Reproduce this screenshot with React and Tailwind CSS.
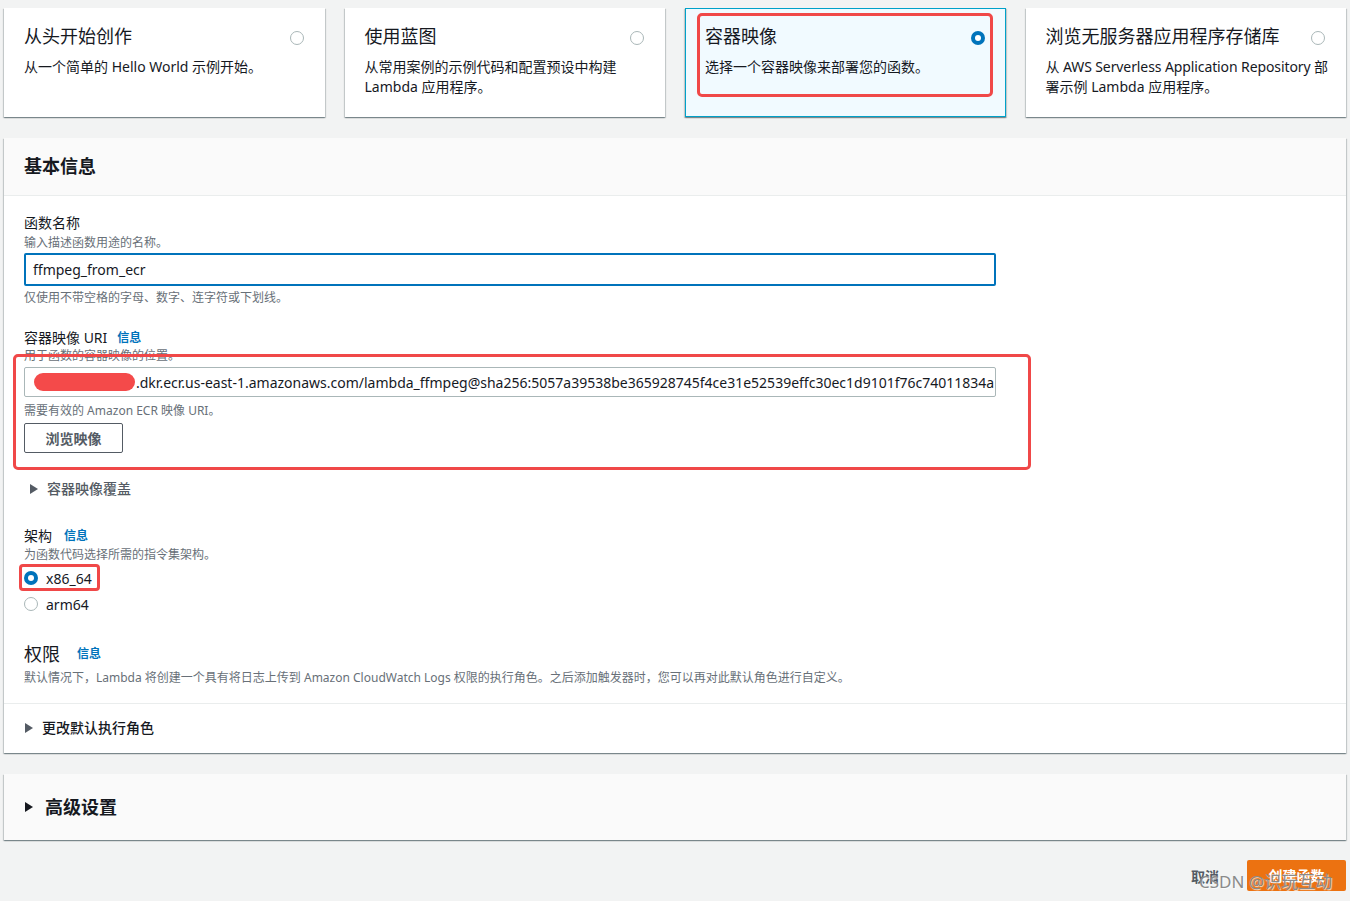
import React from "react";

const FONT = { fontFamily: '"Noto Sans", "Noto Sans CJK SC", sans-serif' };

function Radio({ checked }) {
  return checked ? (
    <span className="flex h-[14px] w-[14px] shrink-0 items-center justify-center rounded-full bg-[#0073bb]">
      <span className="block h-[6px] w-[6px] rounded-full bg-white" />
    </span>
  ) : (
    <span className="block h-[14px] w-[14px] shrink-0 rounded-full border border-[#aab7b8] bg-white" />
  );
}

function Tri({ className = "" }) {
  return (
    <svg width="8" height="10" viewBox="0 0 8 10" className={className}>
      <path d="M0 0 L8 5 L0 10 Z" fill="currentColor" />
    </svg>
  );
}

const cardShadow =
  "shadow-[0_1px_1px_0_rgba(0,28,36,0.3),1px_1px_1px_0_rgba(0,28,36,0.15),-1px_1px_1px_0_rgba(0,28,36,0.15)]";

function Card({ title, desc, selected, highlight }) {
  return (
    <div
      className={`relative h-[109px] ${cardShadow} ${
        selected ? "border border-[#00a1c9] bg-[#f1faff] px-[19px] pt-[14px]" : "bg-white px-5 pt-[15px]"
      }`}
    >
      <div className="flex items-start justify-between">
        <div className="text-[18px] leading-[26px] text-[#16191f]">{title}</div>
        <div className="mt-[8px] mr-[1px]">
          <Radio checked={selected} />
        </div>
      </div>
      <div className="mt-[8px] whitespace-nowrap text-[14px] leading-[20px] text-[#16191f]">{desc}</div>
      {highlight && (
        <div className="absolute left-[11px] top-[4px] h-[84px] w-[296px] rounded-[5px] border-[3px] border-[#f04848]" />
      )}
    </div>
  );
}

export default function App() {
  return (
    <div style={FONT} className="relative min-h-[901px] w-[1350px] bg-[#f2f3f3] px-[4px] pt-[8px]">
      <div className="grid grid-cols-4 gap-5">
        <Card title="从头开始创作" desc="从一个简单的 Hello World 示例开始。" />
        <Card title="使用蓝图" desc={<>从常用案例的示例代码和配置预设中构建<br />Lambda 应用程序。</>} />
        <Card title="容器映像" desc="选择一个容器映像来部署您的函数。" selected highlight />
        <Card
          title="浏览无服务器应用程序存储库"
          desc={
            <>
              <span className="tracking-[-0.1px]">从 AWS Serverless Application Repository 部</span>
              <br />
              署示例 Lambda 应用程序。
            </>
          }
        />
      </div>

      {/* Basic info panel */}
      <div className={`mt-[21px] bg-white ${cardShadow}`}>
        <div className="flex h-[58px] items-center border-b border-[#eaeded] bg-[#fafafa] px-5">
          <div className="text-[18px] font-bold text-[#16191f]">基本信息</div>
        </div>
        <div className="px-5 pt-[17px]">
          <div className="text-[14px] leading-[20px] text-[#16191f]">函数名称</div>
          <div className="mt-[2px] text-[12px] leading-[16px] text-[#687078]">输入描述函数用途的名称。</div>
          <div className="mt-[2px] flex h-[33px] w-[972px] items-center rounded-[2px] border-2 border-[#0073bb] px-[7px] text-[14px] text-[#16191f]">
            ffmpeg_from_ecr
          </div>
          <div className="mt-[4px] text-[12px] leading-[16px] text-[#687078]">仅使用不带空格的字母、数字、连字符或下划线。</div>

          <div className="relative mt-[22px]">
            <div className="flex items-center gap-[10px] text-[14px] leading-[20px] text-[#16191f]">
              <span>容器映像 URI</span>
              <span className="text-[12px] font-bold text-[#0073bb]">信息</span>
            </div>
            <div className="text-[12px] leading-[16px] text-[#687078]">用于函数的容器映像的位置。</div>
            <div className="mt-[3px] flex h-[30px] w-[972px] items-center overflow-hidden whitespace-nowrap rounded-[2px] border border-[#aab7b8] pl-[9px] text-[14px] text-[#16191f]">
              <span className="mr-[1px] inline-block h-[18px] w-[101px] shrink-0 rounded-full bg-[#f44a4a]" />
              <span>.dkr.ecr.us-east-1.amazonaws.com/lambda_ffmpeg@sha256:5057a39538be365928745f4ce31e52539effc30ec1d9101f76c74011834a</span>
            </div>
            <div className="mt-[6px] text-[12px] leading-[16px] text-[#687078]">需要有效的 Amazon ECR 映像 URI。</div>
            <div className="mt-[4px] flex h-[30px] w-[99px] items-center justify-center rounded-[2px] border border-[#545b64] text-[14px] font-bold text-[#545b64]">
              浏览映像
            </div>
            <div className="absolute left-[-11px] top-[26px] h-[116px] w-[1018px] rounded-[5px] border-[3px] border-[#f04848]" />
          </div>

          <div className="mt-[26px] flex items-center gap-[9px] pl-[6px] text-[14px] font-medium leading-[20px] text-[#545b64]">
            <Tri className="text-[#545b64]" />
            <span>容器映像覆盖</span>
          </div>

          <div className="mt-[27px] flex items-center gap-[12px] text-[14px] leading-[20px] text-[#16191f]">
            <span>架构</span>
            <span className="text-[12px] font-bold text-[#0073bb]">信息</span>
          </div>
          <div className="mt-[1px] text-[12px] leading-[16px] text-[#687078]">为函数代码选择所需的指令集架构。</div>
          <div className="relative mt-[2px] flex h-[26px] items-center gap-[8px] text-[14px] text-[#16191f]">
            <Radio checked />
            <span>x86_64</span>
            <div className="absolute left-[-5px] top-[-1px] h-[27px] w-[81px] rounded-[4px] border-[3px] border-[#f04848]" />
          </div>
          <div className="flex h-[26px] items-center gap-[8px] text-[14px] text-[#16191f]">
            <Radio />
            <span>arm64</span>
          </div>

          <div className="mt-[25px] flex items-center gap-[17px] text-[18px] leading-[24px] text-[#16191f]">
            <span>权限</span>
            <span className="text-[12px] font-bold text-[#0073bb]">信息</span>
          </div>
          <div className="mt-[4px] text-[12px] leading-[16px] text-[#687078]">
            默认情况下，Lambda 将创建一个具有将日志上传到 Amazon CloudWatch Logs 权限的执行角色。之后添加触发器时，您可以再对此默认角色进行自定义。
          </div>
        </div>
        <div className="mt-[17px] border-t border-[#eaeded] px-5 pb-[15px] pt-[14px]">
          <div className="flex items-center gap-[9px] pl-[1px] text-[14px] font-medium leading-[20px] text-[#16191f]">
            <Tri className="text-[#545b64]" />
            <span>更改默认执行角色</span>
          </div>
        </div>
      </div>

      {/* Advanced */}
      <div className={`mt-[21px] flex h-[66px] items-center gap-[12px] bg-[#fafafa] px-[21px] ${cardShadow}`}>
        <Tri className="text-[#16191f]" />
        <span className="text-[18px] font-bold text-[#16191f]">高级设置</span>
      </div>

      {/* Footer */}
      <div className="mt-[20px] flex items-center justify-end gap-[28px]">
        <span className="mt-[2px] text-[14px] font-bold text-[#545b64]">取消</span>
        <div className="flex h-[31px] w-[99px] items-center justify-center rounded-[2px] bg-[#ec7211] text-[14px] font-bold text-white">
          创建函数
        </div>
      </div>
      <div className="pointer-events-none absolute left-[1199px] top-[870px] text-[17px] leading-[24px] text-[#8a8a8a] [text-shadow:1px_1px_1px_rgba(255,255,255,0.8)]">
        CSDN @识玩互动
      </div>
    </div>
  );
}
